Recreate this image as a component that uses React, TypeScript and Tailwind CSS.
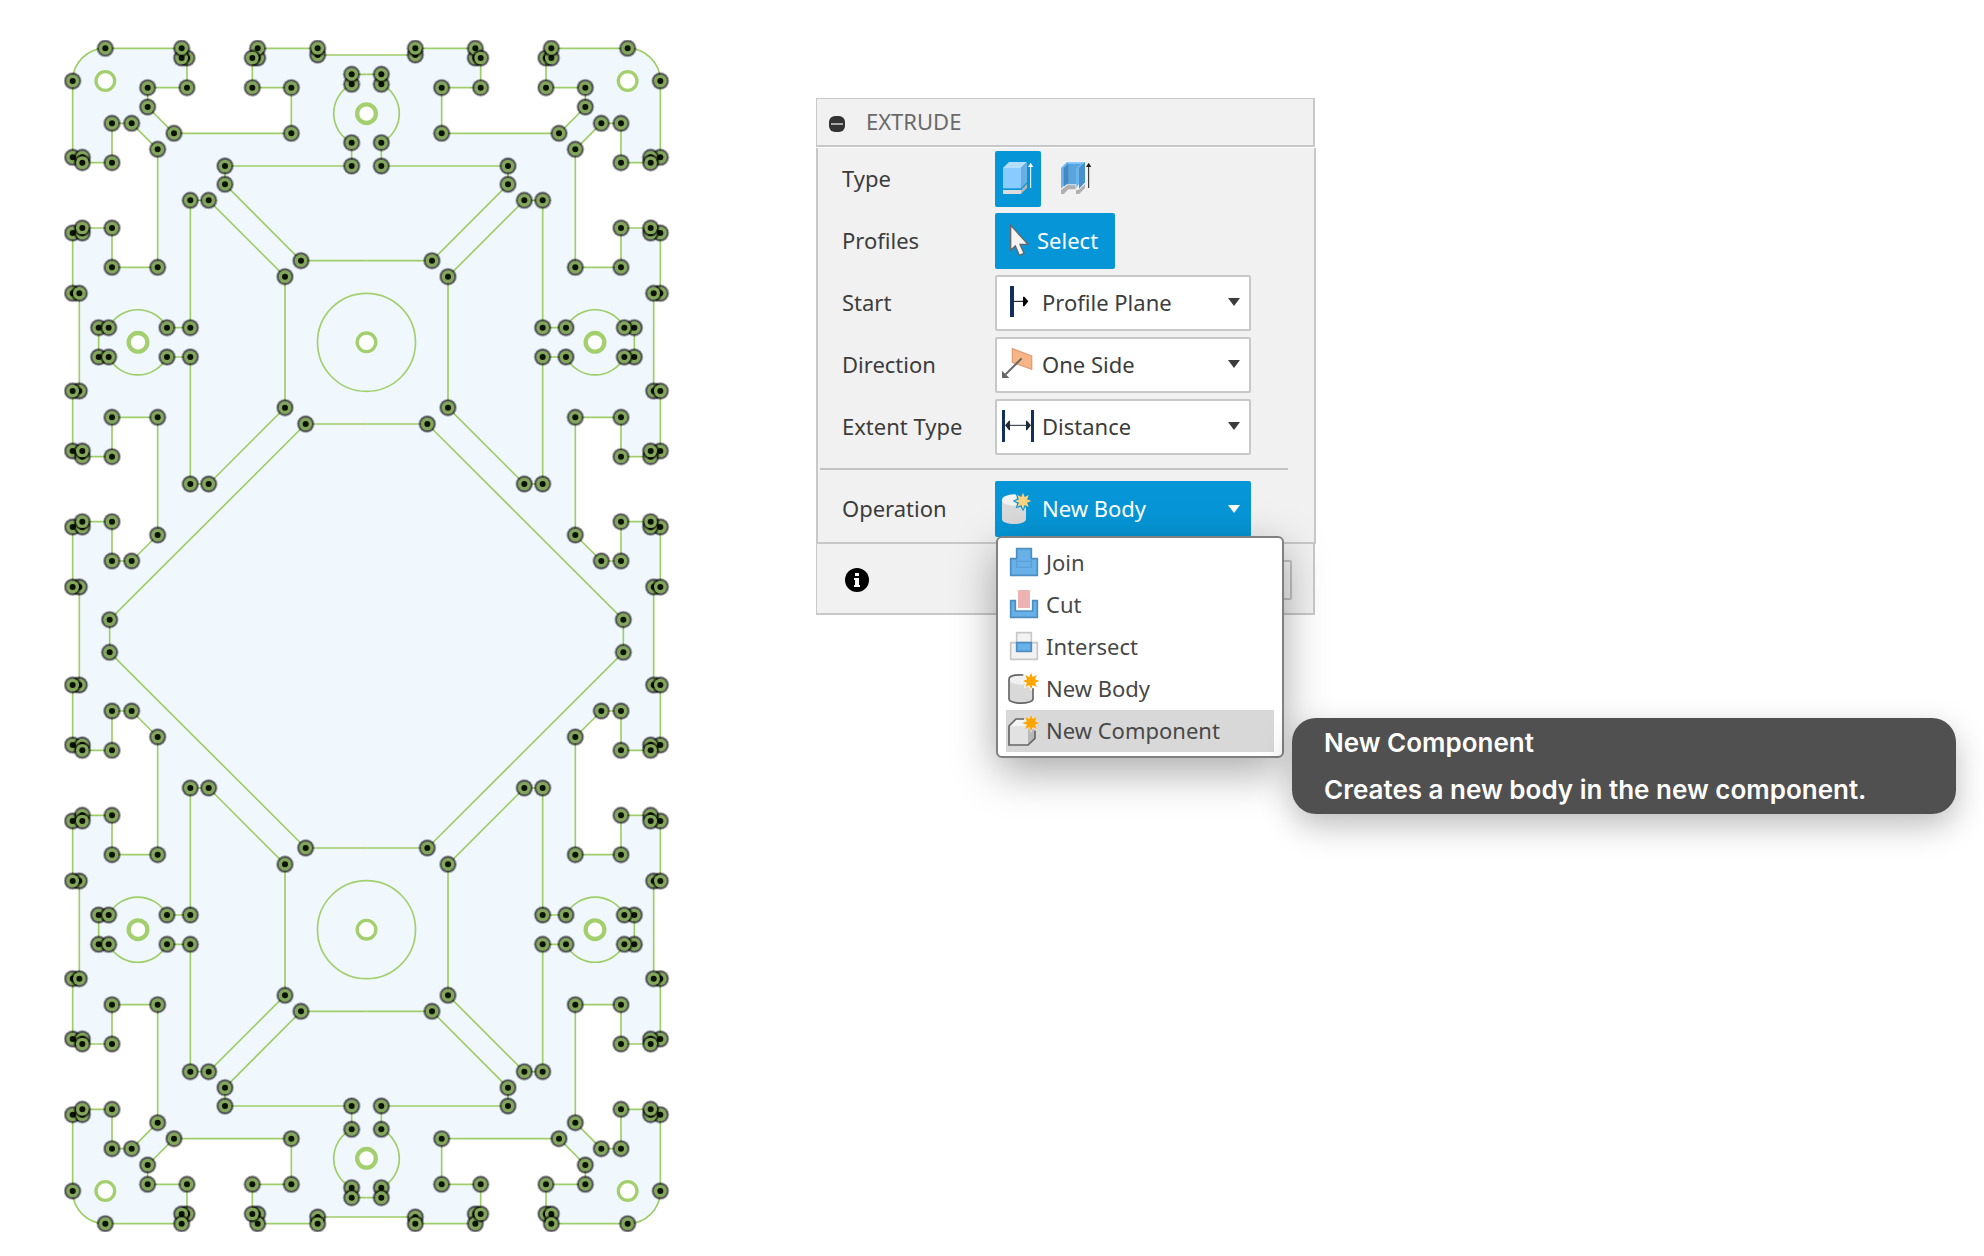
import React, {FC, ReactNode, useState} from "react";

type Point = [number, number];

const CENTER_X = 979.5;
const CENTER_Y = 1818;

const flipX = ([x, y]: Point): Point => [CENTER_X * 2 - x, y];
const flipY = ([x, y]: Point): Point => [x, CENTER_Y * 2 - y];

// top left quarter of the plate, the other quarters are mirrored from it
const topEdge: Point[] = [
    [833, 75], [833, 55], [653, 84], [653, 55], [637, 84], [637, 173], [754, 173], [754, 310],
    [402, 310], [323, 231], [323, 173], [441, 173], [441, 84], [425, 84], [425, 55], [196, 55],
];
const leftEdge: Point[] = [
    [98, 153], [98, 382], [127, 382], [127, 398], [216, 398], [216, 280], [275, 280], [353, 358],
    [353, 712], [216, 712], [216, 594], [98, 609], [127, 609], [127, 594], [98, 790], [118, 790],
    [118, 1083], [98, 1083], [98, 1263], [127, 1280], [127, 1263], [216, 1280], [216, 1162], [353, 1162],
    [353, 1515], [275, 1593], [216, 1593], [216, 1475], [98, 1491], [127, 1491], [127, 1475],
    [118, 1671], [98, 1671],
];
const topPocket: Point[] = [
    [935, 163], [935, 133], [935, 338], [935, 408], [555, 408], [555, 463], [783, 692],
];
const leftPocket: Point[] = [
    [451, 511], [506, 511], [735, 740], [735, 1133], [506, 1362], [451, 1362],
    [451, 981], [381, 981], [176, 981], [206, 981], [176, 893], [206, 893], [381, 893], [451, 893],
];
const middlePocket: Point[] = [[797, 1182], [209, 1769]];

const quarter = [...topEdge, ...leftEdge, ...topPocket, ...leftPocket, ...middlePocket];
const leftHalf = [...quarter, ...quarter.map(flipY)];
const nodes = [...leftHalf, ...leftHalf.map(flipX)];

const QUARTER_OUTLINE =
    "M980 75H833V55H653V84H637V173H754V310H402L323 231V173H441V84H425V55H196A98 98 0 0 0 98 153" +
    "V382H127V398H216V280H275L353 358V712H216V594H127V609H98V790H118V1083H98V1263H127V1280H216V1162H353" +
    "V1515L275 1593H216V1475H127V1491H98V1671H118V1818";
const QUARTER_POCKETS =
    "M980 133H935V163A98 98 0 0 0 935 338V408H555V463L783 692H980" +
    "M451 893H381A98 98 0 0 0 206 893H176V981H206A98 98 0 0 0 381 981H451" +
    "V1362H506L735 1133V740L506 511H451V893" +
    "M980 1182H797L209 1769V1818";

const Quarter = () => (
    <>
        <path d={`${QUARTER_OUTLINE}H980Z`} fill="#f0f8fe"/>
        <path d={QUARTER_OUTLINE} fill="none" stroke="#9fcd68" strokeWidth="5"/>
        <path d={QUARTER_POCKETS} fill="none" stroke="#9fcd68" strokeWidth="5"/>
        <circle cx="196" cy="153" r="28" fill="#fff" stroke="#a3cf6e" strokeWidth="10"/>
        <circle cx="294" cy="937" r="28" fill="#fff" stroke="#a3cf6e" strokeWidth="13"/>
    </>
);

const Sketch = () => (
    <svg viewBox="72 30 1824 3576" className="mt-10 ml-16 w-[608px] shrink-0" role="img" aria-label="Sketch profiles">
        <Quarter/>
        <g transform="translate(1959 0) scale(-1 1)"><Quarter/></g>
        <g transform="translate(0 3636) scale(1 -1)"><Quarter/></g>
        <g transform="translate(1959 3636) scale(-1 -1)"><Quarter/></g>
        {[937, 2699].map((y) => (
            <g key={y} stroke="#a3cf6e">
                <circle cx={CENTER_X} cy={y} r="147" fill="none" strokeWidth="5"/>
                <circle cx={CENTER_X} cy={y} r="28" fill="#fff" strokeWidth="10"/>
            </g>
        ))}
        {[251, 3385].map((y) => (
            <circle key={y} cx={CENTER_X} cy={y} r="28" fill="#fff" stroke="#a3cf6e" strokeWidth="13"/>
        ))}
        {nodes.map(([x, y], index) => (
            <g key={index}>
                <circle cx={x} cy={y} r="27" fill="#000" fillOpacity="0.3"/>
                <circle cx={x} cy={y} r="24" fill="#000" fillOpacity="0.5"/>
                <circle cx={x} cy={y} r="19" fill="#82a65a"/>
                <circle cx={x} cy={y} r="9" fill="#0c1206"/>
            </g>
        ))}
    </svg>
);

const starPoints = (cx: number, cy: number, outer: number, inner: number) =>
    Array.from({length: 16}, (_, i) => {
        const radius = i % 2 === 0 ? outer : inner;
        const angle = (i * Math.PI) / 8;
        return `${cx + radius * Math.sin(angle)},${cy - radius * Math.cos(angle)}`;
    }).join(" ");

const SolidIcon = () => (
    <svg viewBox="15 3 138 168" className="h-14 w-[46px]">
        <path d="M39 54L57 36H111L93 54Z" fill="#b3deff"/>
        <path d="M39 54H93V115H39Z" fill="#8accff"/>
        <path d="M93 54L111 36V97L93 115Z" fill="#68afe4"/>
        <path d="M39 120H93V132H39Z" fill="#dcdcdc"/>
        <path d="M93 120L111 102V114L93 132Z" fill="#b4b4b4"/>
        <path d="M122 114V44" stroke="#fff" strokeWidth="3"/>
        <path d="M114 51L122 38L130 51Z" fill="#fff"/>
    </svg>
);

const ThinIcon = () => (
    <svg viewBox="189 3 138 168" className="h-14 w-[46px]">
        <path d="M231 36H285V90L258 108H231Z" fill="#5aa4dc"/>
        <path d="M213 54L231 36V96L213 117Z" fill="#6cb4ec"/>
        <path d="M221 54L235 41V98L221 111Z" fill="#4389c0"/>
        <path d="M231 36H285L281 41H234Z" fill="#8accff"/>
        <path d="M258 54L276 39V60L267 100L258 117Z" fill="#6cb4ec"/>
        <path d="M267 54L285 36V97L267 117Z" fill="#4792cd"/>
        <path d="M213 120L231 104H258V120L267 118L285 102V114L267 132H258V118H235L222 132H213Z" fill="#b0b0b0"/>
        <path d="M213 119L233 104H258V118H267L285 100" fill="none" stroke="#fff" strokeWidth="2"/>
        <path d="M296 114V44" stroke="#222" strokeWidth="3"/>
        <path d="M288 51L296 38L304 51Z" fill="#222"/>
    </svg>
);

const CursorIcon = () => (
    <svg viewBox="15 189 138 168" className="h-14 w-[46px]">
        <path d="M62 226V301L76 288L88 316L102 310L90 283H114Z" fill="#f4f4f4" stroke="#666" strokeWidth="4"/>
    </svg>
);

const StartIcon = () => (
    <svg viewBox="15 555 138 168" className="h-14 w-[46px]">
        <path d="M60 588H72V681H60Z" fill="#12305f"/>
        <path d="M72 634H102" stroke="#000" strokeWidth="3"/>
        <path d="M99 620H103L115 634L103 649H99Z" fill="#000"/>
    </svg>
);

const DirectionIcon = () => (
    <svg viewBox="15 6 138 168" className="h-14 w-[46px]">
        <path d="M67 41L125 63V103L67 82Z" fill="#f7b587" stroke="#e0a077" strokeWidth="4"/>
        <path d="M95 70L46 119" stroke="#666" strokeWidth="6"/>
        <path d="M36 107V129H58Z" fill="#666"/>
    </svg>
);

const ExtentIcon = () => (
    <svg viewBox="15 192 138 168" className="h-14 w-[46px]">
        <path d="M36 225H45V321H36ZM123 225H132V321H123Z" fill="#12305f"/>
        <path d="M54 271H114" stroke="#222b35" strokeWidth="3"/>
        <path d="M45 271L57 257H60V286H57ZM123 271L111 257H108V286H111Z" fill="#222b35"/>
    </svg>
);

const BodyIcon = () => (
    <svg viewBox="15 438 138 168" className="h-14 w-[46px]">
        <path d="M36 495V552C36 572 108 572 108 552V495Z" fill="#dadada"/>
        <ellipse cx="72" cy="495" rx="36" ry="17" fill="#f2f2f2"/>
        <polygon points={starPoints(99, 498, 31, 19)} fill="#0696d7"/>
        <polygon points={starPoints(99, 498, 25, 13)} fill="#ffd27f"/>
    </svg>
);

const JoinIcon = () => (
    <svg viewBox="78 36 108 126" className="h-[42px] w-9">
        <path d="M92 86H110V56H154V86H172V136H92Z" fill="#68b1e8" stroke="#4d8dbf" strokeWidth="5"/>
        <path d="M110 86V112H154V86M110 94H154" fill="none" stroke="#5a9fd4" strokeWidth="4"/>
    </svg>
);

const CutIcon = () => (
    <svg viewBox="78 162 108 126" className="h-[42px] w-9">
        <path d="M92 212H106V243H158V212H172V262H92Z" fill="#68b1e8" stroke="#4d8dbf" strokeWidth="5"/>
        <path d="M114 180H150V234H114Z" fill="#edb3b3"/>
    </svg>
);

const IntersectIcon = () => (
    <svg viewBox="78 288 108 126" className="h-[42px] w-9">
        <path d="M92 338H172V388H92Z" fill="#f2f2f2" stroke="#c8c8c8" strokeWidth="5"/>
        <path d="M110 308H154V338H110Z" fill="#f2f2f2" stroke="#c8c8c8" strokeWidth="5"/>
        <path d="M110 338H154V364H110Z" fill="#68b1e8" stroke="#4d8dbf" strokeWidth="5"/>
    </svg>
);

const NewBodyIcon = () => (
    <svg viewBox="78 414 108 126" className="h-[42px] w-9">
        <path d="M87 448V506C87 524 159 524 159 506V448Z" fill="#d9d9d9"/>
        <ellipse cx="123" cy="449" rx="35" ry="15" fill="#f0f0f0"/>
        <path d="M130 435C104 433 87 438 87 448V506C87 524 159 524 159 506V474" fill="none" stroke="#666" strokeWidth="5"/>
        <polygon points={starPoints(153, 453, 30, 18)} fill="#fff"/>
        <polygon points={starPoints(153, 453, 25, 13)} fill="#ffa500"/>
    </svg>
);

const NewComponentIcon = () => (
    <svg viewBox="78 540 108 126" className="h-[42px] w-9">
        <path d="M87 588L108 567H165V625L144 645H87Z" fill="#e2e2e2"/>
        <path d="M90 588L109 569H162L144 588Z" fill="#f4f4f4"/>
        <path d="M144 588L165 600V625L144 645Z" fill="#b8b8b8"/>
        <path d="M132 567H108L87 588V645H144L165 625V602" fill="none" stroke="#666" strokeWidth="5"/>
        <polygon points={starPoints(153, 579, 29, 17)} fill="#e4e4e4"/>
        <polygon points={starPoints(153, 579, 25, 13)} fill="#ffa500"/>
    </svg>
);

const Caret = () => (
    <svg viewBox="0 0 12 8" className="w-3" fill="currentColor"><path d="M0 0H12L6 8Z"/></svg>
);

interface RowProps {
    label: string;
    htmlFor?: string;
    children: ReactNode;
}

const Row: FC<RowProps> = ({label, htmlFor, children}) => (
    <div className="flex h-14 items-center">
        <label htmlFor={htmlFor} className="w-[153px] shrink-0 pb-0.5">{label}</label>
        {children}
    </div>
);

interface SelectRowProps {
    id: string;
    label: string;
    value: string;
    icon: ReactNode;
}

const SelectRow: FC<SelectRowProps> = ({id, label, value, icon}) => (
    <Row label={label} htmlFor={id}>
        <div className="relative w-64">
            <select
                id={id}
                className="block h-14 w-full appearance-none rounded-xs border-2 border-[#c8c8c8] bg-white pb-0.5 pl-[45px] focus:outline-none"
            >
                <option>{value}</option>
            </select>
            <span className="pointer-events-none absolute top-0 left-0">{icon}</span>
            <span className="pointer-events-none absolute top-0 right-[11px] flex h-[54px] items-center"><Caret/></span>
        </div>
    </Row>
);

const operations = [
    {name: "Join", icon: <JoinIcon/>},
    {name: "Cut", icon: <CutIcon/>},
    {name: "Intersect", icon: <IntersectIcon/>},
    {name: "New Body", icon: <NewBodyIcon/>},
    {name: "New Component", icon: <NewComponentIcon/>},
];

const OperationMenu = ({onSelect}: { onSelect: (name: string) => void }) => (
    <div className="absolute top-[55px] left-px z-10 w-72 rounded-md border-2 border-[#808080] bg-white px-2 py-1 shadow-[0_14px_44px_rgba(0,0,0,0.34)]">
        <ul role="listbox" aria-label="Operation">
            {operations.map(({name, icon}) => (
                <li key={name} role="option" aria-selected={name === "New Component"}>
                    <button
                        onClick={() => onSelect(name)}
                        className={`flex h-[42px] w-full items-center gap-1 text-left text-[#484848] ${name === "New Component" ? "bg-[#d8d8d8]" : ""}`}
                    >
                        {icon}
                        <span className="pb-0.5">{name}</span>
                    </button>
                </li>
            ))}
        </ul>
        <div
            role="tooltip"
            className="absolute top-[180px] left-[294px] flex h-24 w-[664px] flex-col justify-center rounded-3xl bg-[#505050] px-8 font-[Inter,sans-serif] text-[26px] leading-[47px] font-semibold text-white shadow-[0_12px_32px_rgba(0,0,0,0.26)]"
        >
            <p>New Component</p>
            <p>Creates a new body in the new component.</p>
        </div>
    </div>
);

const ExtrudePanel = () => {
    const [operation, setOperation] = useState("New Body");
    const [isOpen, setIsOpen] = useState(true);

    return (
        <section className="mt-[98px] ml-36 w-[500px] shrink-0 text-[22px] text-[#3c3c3c]">
            <header className="mr-px flex h-[49px] items-center border border-r-2 border-b-2 border-[#c8c8c8] bg-[#f1f1f1] pl-3">
                <button aria-label="Collapse" className="mt-1 flex size-4 items-center justify-center rounded-md bg-[#333]">
                    <span className="h-0.5 w-3 bg-[#aaa]"/>
                </button>
                <h1 className="ml-[21px] pb-0.5 text-[#6a6a6a]">EXTRUDE</h1>
            </header>
            <div className="mt-px flex flex-col gap-1.5 border-x-2 border-b-2 border-[#c8c8c8] bg-[#f1f1f1] pt-[3px] pb-[5px] pl-6">
                <Row label="Type">
                    <button aria-label="Solid extrude" className="rounded-xs bg-[#0696d7]"><SolidIcon/></button>
                    <button aria-label="Thin extrude" className="ml-3"><ThinIcon/></button>
                </Row>
                <Row label="Profiles" htmlFor="profiles">
                    <button id="profiles" className="flex h-14 w-[120px] items-center rounded-xs bg-[#0696d7] text-white">
                        <CursorIcon/>
                        <span className="-ml-1 pb-0.5">Select</span>
                    </button>
                </Row>
                <SelectRow id="start" label="Start" value="Profile Plane" icon={<StartIcon/>}/>
                <SelectRow id="direction" label="Direction" value="One Side" icon={<DirectionIcon/>}/>
                <SelectRow id="extent" label="Extent Type" value="Distance" icon={<ExtentIcon/>}/>
                <hr className="mt-[7px] mr-[26px] mb-[5px] -ml-[22px] border-t-2 border-[#c2c2c2]"/>
                <Row label="Operation" htmlFor="operation">
                    <div className="relative w-64">
                        <button
                            id="operation"
                            aria-haspopup="listbox"
                            aria-expanded={isOpen}
                            onClick={() => setIsOpen(!isOpen)}
                            className="flex h-14 w-full items-center rounded-xs bg-[#0696d7] pr-[11px] text-white"
                        >
                            <BodyIcon/>
                            <span className="ml-px flex-1 pb-0.5 text-left">{operation}</span>
                            <Caret/>
                        </button>
                        {isOpen && (
                            <OperationMenu
                                onSelect={(name) => {
                                    setOperation(name);
                                    setIsOpen(false);
                                }}
                            />
                        )}
                    </div>
                </Row>
            </div>
            <footer className="mr-px flex h-[71px] items-center justify-between border-r-2 border-b-2 border-l border-[#c8c8c8] bg-[#f1f1f1] pt-0.5 pr-[21px] pl-7">
                <button aria-label="Information">
                    <svg viewBox="0 0 24 24" className="size-6">
                        <circle cx="12" cy="12" r="12" fill="#000"/>
                        <path d="M10 5H14V8H10ZM9 10H14V17H15V19H9V17H10V12H9Z" fill="#fff"/>
                    </svg>
                </button>
                <button aria-label="Cancel" className="h-10 w-24 rounded-xs border-2 border-[#c2c2c2]"/>
            </footer>
        </section>
    );
};

const App = () => (
    <main className="flex min-h-screen items-start overflow-hidden bg-white pb-6 font-['Noto_Sans',sans-serif]">
        <Sketch/>
        <ExtrudePanel/>
    </main>
);

export default App;
